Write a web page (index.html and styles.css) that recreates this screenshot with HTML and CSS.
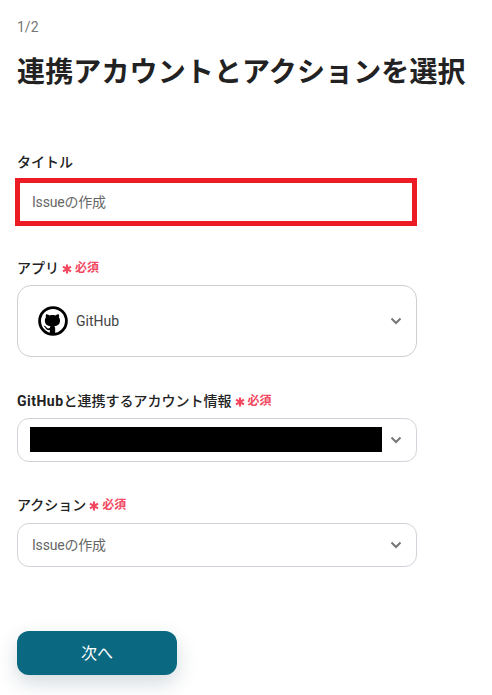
FILE: index.html
```html
<!DOCTYPE html>
<html lang="ja">
<head>
<meta charset="utf-8">
<title>連携アカウントとアクションを選択</title>
<link rel="stylesheet" href="styles.css">
</head>
<body>
<main class="page">
  <div class="step">1/2</div>
  <h1 class="title">連携アカウントとアクションを選択</h1>

  <section class="field field-title">
    <div class="label">タイトル</div>
    <div class="input highlighted"><span class="value">Issueの作成</span></div>
  </section>

  <section class="field field-app">
    <div class="label">アプリ<span class="req"><svg class="star" viewBox="0 0 10 10"><path d="M5 .5v9M1 2.6l8 4.8M9 2.6L1 7.4"/></svg>必須</span></div>
    <div class="select select-app">
      <svg class="logo" viewBox="0 0 32 32">
        <circle cx="16" cy="16" r="14.3" fill="#fff" stroke="#000" stroke-width="3"/>
        <path fill="#000" d="M12.6 29v-3.4c-3.2.7-4.3-1.1-4.8-2.3-.3-.7-.8-1.4-1.5-1.8-.5-.3-.3-.6.3-.5 1.3.2 2 1.2 2.6 2 .9 1.2 2.3 1 3.4.5.1-.9.4-1.5.8-1.9-3.4-.5-6.1-2-6.1-6.2 0-1.3.5-2.4 1.2-3.2-.2-.5-.5-1.8.2-3.5 0 0 1.1-.3 3.5 1.3 1-.3 2.1-.4 3.2-.4s2.2.1 3.2.4c2.4-1.6 3.5-1.3 3.5-1.3.7 1.7.4 3 .2 3.5.8.8 1.2 1.9 1.2 3.2 0 4.2-2.7 5.7-6.1 6.2.5.5.9 1.3.9 2.6V29z"/>
      </svg>
      <span class="app-name">GitHub</span>
      <svg class="chevron" viewBox="0 0 12 8"><path d="M1.5 1.5L6 6l4.5-4.5"/></svg>
    </div>
  </section>

  <section class="field field-account">
    <div class="label"><span class="strong">GitHub</span>と連携するアカウント情報<span class="req"><svg class="star" viewBox="0 0 10 10"><path d="M5 .5v9M1 2.6l8 4.8M9 2.6L1 7.4"/></svg>必須</span></div>
    <div class="select select-account">
      <div class="redacted"></div>
      <svg class="chevron" viewBox="0 0 12 8"><path d="M1.5 1.5L6 6l4.5-4.5"/></svg>
    </div>
  </section>

  <section class="field field-action">
    <div class="label">アクション<span class="req"><svg class="star" viewBox="0 0 10 10"><path d="M5 .5v9M1 2.6l8 4.8M9 2.6L1 7.4"/></svg>必須</span></div>
    <div class="select select-action">
      <span class="value">Issueの作成</span>
      <svg class="chevron" viewBox="0 0 12 8"><path d="M1.5 1.5L6 6l4.5-4.5"/></svg>
    </div>
  </section>

  <button class="next" type="button">次へ</button>
</main>
</body>
</html>
```

FILE: styles.css
```css
* { box-sizing: border-box; }
html, body { margin: 0; padding: 0; background: #fff; }
body {
  font-family: Roboto, "Noto Sans CJK JP", sans-serif;
  color: #222;
  height: 695px;
  overflow: hidden;
}
.page { padding: 18px 0 0 17px; width: 492px; }
.step { font-size: 14px; line-height: 18px; color: #777; }
.title {
  margin: 16px 0 0;
  font-size: 28px;
  line-height: 42px;
  font-weight: 700;
  letter-spacing: 0.13px;
  color: #222;
  white-space: nowrap;
}
.field { width: 400px; }
.field-title { margin-top: 58px; }
.field-app { margin-top: 32px; }
.field-account { margin-top: 34px; }
.field-action { margin-top: 33px; }
.label {
  display: flex;
  align-items: center;
  font-size: 14px;
  line-height: 20px;
  font-weight: 500;
  color: #222;
  white-space: nowrap;
  height: 20px;
}
.strong { font-weight: 700; letter-spacing: 0.5px; }
.req {
  display: inline-flex;
  align-items: center;
  margin-left: 3px;
  font-size: 12px;
  font-weight: 700;
  color: #f2475f;
}
.star {
  width: 10px;
  height: 10px;
  margin-right: 3px;
  margin-top: 2px;
  fill: none;
  stroke: #f2475f;
  stroke-width: 2.2;
}
.input {
  margin: 6px 0 0 -2px;
  width: 402px;
  height: 48px;
  padding: 0 0 3px 12px;
  display: flex;
  align-items: center;
  font-size: 14px;
  color: #666;
}
.highlighted { border: 5px solid #ed1c24; }
.value { letter-spacing: -0.2px; }
.select {
  display: flex;
  align-items: center;
  width: 400px;
  border: 1px solid #d0d3d9;
  border-radius: 12px;
  background: #fff;
  font-size: 14px;
  color: #666;
}
.select-app {
  margin-top: 7px;
  height: 72px;
  padding-left: 20px;
  border-radius: 14px;
  border-color: #cfcfcf;
}
.select-account {
  margin-top: 7px;
  height: 44px;
  padding-left: 12px;
}
.select-action {
  margin-top: 8px;
  height: 44px;
  padding-left: 14px;
}
.select-action .value { margin-top: -3px; }
.logo { width: 30px; height: 30px; flex: none; }
.app-name { margin-left: 8px; color: #444; font-size: 14px; }
.redacted { width: 352px; height: 25px; background: #000; flex: none; margin-top: -1px; }
.chevron {
  margin-left: auto;
  margin-right: 14px;
  width: 12px;
  height: 8px;
  flex: none;
  fill: none;
  stroke: #777;
  stroke-width: 2;
}
.next {
  display: block;
  margin-top: 64px;
  width: 160px;
  height: 44px;
  padding: 0 0 2px;
  border: 0;
  border-radius: 12px;
  background: #0a6981;
  color: #fff;
  font-family: inherit;
  font-size: 16px;
  box-shadow: 0 8px 20px rgba(10, 50, 70, 0.18);
}
```
